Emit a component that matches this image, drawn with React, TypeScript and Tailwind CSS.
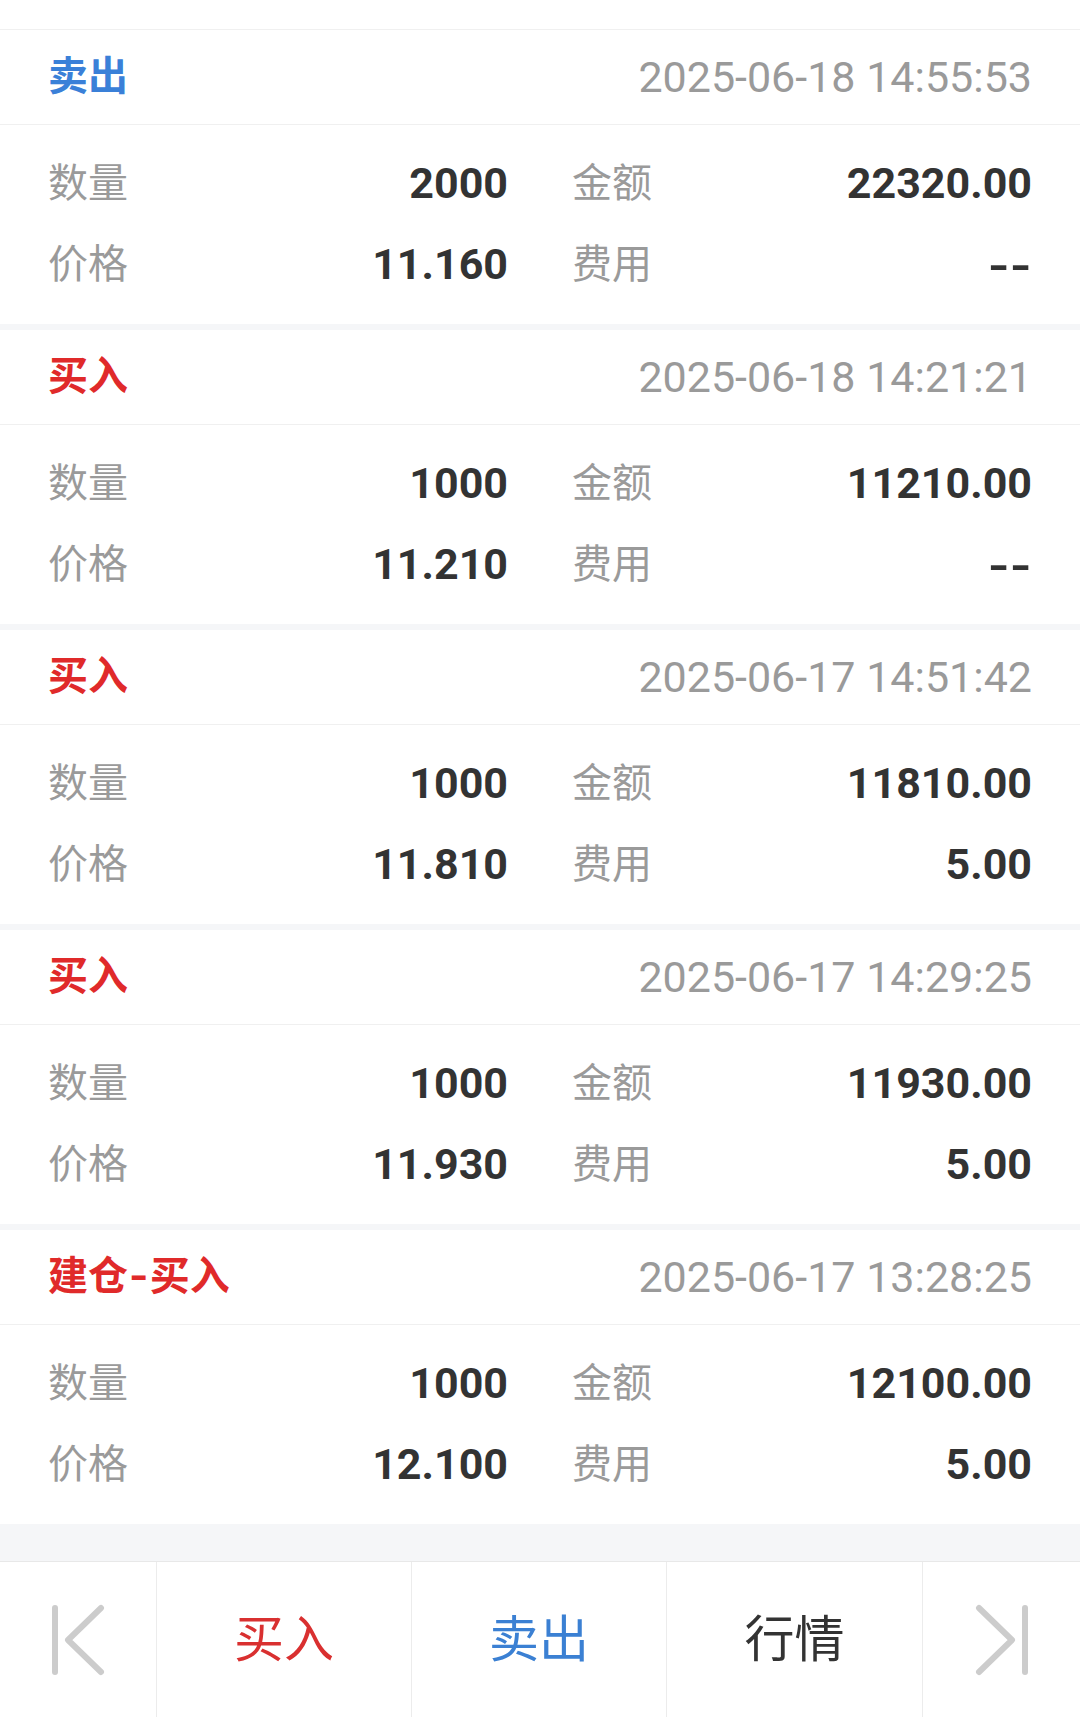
import React from "react";

type Trade = {
  type: string;
  color: "red" | "blue";
  time: string;
  qty: string;
  amount: string;
  price: string;
  fee: string;
};

const trades: Trade[] = [
  { type: "卖出", color: "blue", time: "2025-06-18 14:55:53", qty: "2000", amount: "22320.00", price: "11.160", fee: "--" },
  { type: "买入", color: "red", time: "2025-06-18 14:21:21", qty: "1000", amount: "11210.00", price: "11.210", fee: "--" },
  { type: "买入", color: "red", time: "2025-06-17 14:51:42", qty: "1000", amount: "11810.00", price: "11.810", fee: "5.00" },
  { type: "买入", color: "red", time: "2025-06-17 14:29:25", qty: "1000", amount: "11930.00", price: "11.930", fee: "5.00" },
  { type: "建仓-买入", color: "red", time: "2025-06-17 13:28:25", qty: "1000", amount: "12100.00", price: "12.100", fee: "5.00" },
];

const FONT = "font-['Roboto','Noto_Sans_CJK_SC',sans-serif]";

function Cell({ label, value }: { label: string; value: string }) {
  return (
    <div className="flex items-center justify-between h-[81px]">
      <span className="text-[40px] leading-none text-[#9a9a9a]">{label}</span>
      {value === "--" ? (
        <span className="text-[43px] leading-none font-bold text-[#333333] inline-block scale-x-[1.3] origin-right translate-y-[2px]">--</span>
      ) : (
        <span className="text-[43px] leading-none font-bold text-[#333333]">{value}</span>
      )}
    </div>
  );
}

function Title({ text }: { text: string }) {
  const parts = text.split("-");
  if (parts.length === 1) return <>{text}</>;
  return (
    <>
      {parts[0]}
      <span className="inline-block mx-[3px] scale-x-125">-</span>
      {parts[1]}
    </>
  );
}

function Card({ t }: { t: Trade }) {
  return (
    <div className="bg-white">
      <div className="h-[95px] px-[48px] flex items-center justify-between border-b border-[#f0f0f0]">
        <span
          className={
            "text-[40px] leading-none font-bold " +
            (t.color === "red" ? "text-[#e02a2a]" : "text-[#3a80d8]")
          }
        >
          <Title text={t.type} />
        </span>
        <span className="text-[43px] leading-none text-[#9a9a9a]">{t.time}</span>
      </div>
      <div className="h-[199px] px-[48px] pt-[18px] grid grid-cols-2 gap-x-[64px] content-start">
        <Cell label="数量" value={t.qty} />
        <Cell label="金额" value={t.amount} />
        <Cell label="价格" value={t.price} />
        <Cell label="费用" value={t.fee} />
      </div>
    </div>
  );
}

function FirstIcon() {
  return (
    <svg width="54" height="72" viewBox="0 0 54 72" fill="none" stroke="#cccccc" strokeWidth="6" strokeLinecap="round" strokeLinejoin="round">
      <line x1="4" y1="4" x2="4" y2="68" />
      <polyline points="50,4 17,36 50,68" />
    </svg>
  );
}

function LastIcon() {
  return (
    <svg width="54" height="72" viewBox="0 0 54 72" fill="none" stroke="#cccccc" strokeWidth="6" strokeLinecap="round" strokeLinejoin="round">
      <line x1="50" y1="4" x2="50" y2="68" />
      <polyline points="4,4 37,36 4,68" />
    </svg>
  );
}

export default function App() {
  return (
    <div className={"w-[1080px] h-[1717px] bg-[#f5f6f8] flex flex-col overflow-hidden " + FONT}>
      <div className="h-[30px] bg-white border-b border-[#f0f0f0] shrink-0" />
      <div className="flex flex-col gap-[6px] shrink-0">
        {trades.map((t, i) => (
          <Card key={i} t={t} />
        ))}
      </div>
      <div className="h-[37px] shrink-0" />
      <div className="h-[156px] bg-white border-t border-[#e8e8e8] grid grid-cols-[157px_255px_255px_256px_1fr] shrink-0">
        <div className="flex items-center justify-center border-r border-[#ececec]">
          <FirstIcon />
        </div>
        <div className="flex items-center justify-center border-r border-[#ececec] text-[50px] leading-none text-[#d93030]">
          买入
        </div>
        <div className="flex items-center justify-center border-r border-[#ececec] text-[50px] leading-none text-[#3b80d3]">
          卖出
        </div>
        <div className="flex items-center justify-center border-r border-[#ececec] text-[50px] leading-none text-[#333333]">
          行情
        </div>
        <div className="flex items-center justify-center">
          <LastIcon />
        </div>
      </div>
    </div>
  );
}
